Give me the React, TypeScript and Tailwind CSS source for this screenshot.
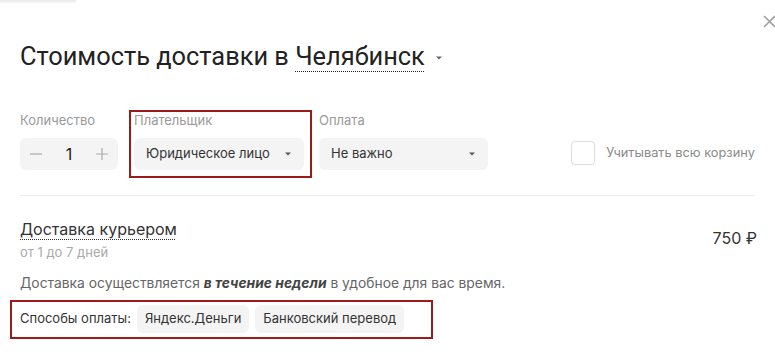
import React from "react";

function Caret({ className = "" }: { className?: string }) {
  return (
    <svg width="6" height="4" viewBox="0 0 6 4" className={className}>
      <path d="M0 0.5h6L3 3.5z" fill="currentColor" />
    </svg>
  );
}

export default function App() {
  return (
    <div
      className="relative w-[775px] h-[360px] overflow-hidden bg-white text-[#333]"
      style={{ fontFamily: "Inter, 'Noto Sans', sans-serif" }}
    >
      {/* край соседнего блока сверху */}
      <div className="absolute left-0 top-0 h-[3px] w-[76px] bg-gradient-to-b from-[#e9e9e9] to-[#f7f7f7]" />

      <button className="absolute right-[-1px] top-[15px] text-[#a0a0a0]">
        <svg width="13" height="13" viewBox="0 0 13 13">
          <path d="M1 1l11 11M12 1L1 12" stroke="currentColor" strokeWidth="1.6" />
        </svg>
      </button>

      <div className="px-[20px] pt-[40px]">
        <h1
          className="flex items-center text-[25.4px] leading-[32px] text-[#222]"
          style={{ fontFamily: "Roboto, 'Liberation Sans', sans-serif" }}
        >
          Стоимость доставки в&nbsp;
          <span className="underline decoration-dotted decoration-1 underline-offset-[6px]">Челябинск</span>
          <Caret className="ml-[11px] mt-[3px] text-[#666]" />
        </h1>

        <div className="mt-[38px] flex items-start">
          <div className="mt-[2px] w-[98px]">
            <div className="text-[13px] leading-4 text-[#9a9a9a]">Количество</div>
            <div className="mt-[10px] flex h-8 items-center justify-between rounded-md bg-[#f4f4f4] px-[10px] text-[#aaa]">
              <svg width="12" height="12" viewBox="0 0 12 12">
                <path d="M0 6h12" stroke="currentColor" strokeWidth="1.2" />
              </svg>
              <span className="text-[16px] text-[#222]">1</span>
              <svg width="12" height="12" viewBox="0 0 12 12">
                <path d="M0 6h12M6 0v12" stroke="currentColor" strokeWidth="1.2" />
              </svg>
            </div>
          </div>

          <div className="ml-[11px] border-2 border-[#9b1b1b] pl-[3px] pr-[6px] pb-[6px]">
            <div className="text-[13px] leading-4 text-[#9a9a9a]">Плательщик</div>
            <div className="mt-[10px] flex h-8 w-[170px] items-center justify-between rounded-md bg-[#f4f4f4] pl-[12px] pr-[13px] text-[13px] text-[#333]">
              Юридическое лицо
              <Caret className="text-[#555]" />
            </div>
          </div>

          <div className="ml-[7px] mt-[2px] w-[169px]">
            <div className="text-[13px] leading-4 text-[#9a9a9a]">Оплата</div>
            <div className="mt-[10px] flex h-8 items-center justify-between rounded-md bg-[#f4f4f4] pl-[12px] pr-[13px] text-[13px] text-[#333]">
              Не важно
              <Caret className="text-[#555]" />
            </div>
          </div>

          <label className="ml-auto mt-[31px] flex items-center gap-[11px]">
            <span className="h-6 w-6 rounded border border-[#dcdcdc] bg-white" />
            <span className="text-[12.8px] text-[#8a8a8a]">Учитывать всю корзину</span>
          </label>
        </div>

        <div className="mt-[17px] h-px bg-[#ececec]" />

        <div className="mt-[21px] flex items-center justify-between">
          <div>
            <div className="text-[16px] leading-6 text-[#333]">
              <span className="underline decoration-dotted decoration-1 underline-offset-[4px]">Доставка курьером</span>
            </div>
            <div className="mt-[2px] text-[13px] leading-[18px] text-[#aaa]">от 1 до 7 дней</div>
          </div>
          <div className="-mr-[2px] mb-[2px] text-[16px] text-[#333]">750 ₽</div>
        </div>

        <p className="mt-[12px] text-[13.85px] leading-5 text-[#666]">
          Доставка осуществляется <b className="font-bold italic text-[#444]">в течение недели</b> в удобное для вас время.
        </p>

        <div className="ml-[-10px] mt-[7px] flex w-[423px] items-center gap-[6px] border-2 border-[#9b1b1b] pl-[8px] pt-[3px] pb-[4px]">
          <span className="text-[13px] text-[#333]">Способы оплаты:</span>
          <div className="flex gap-[6px]">
            <span className="flex h-7 items-center rounded-md bg-[#f4f4f4] px-[8px] text-[13px] text-[#333]">Яндекс.Деньги</span>
            <span className="flex h-7 items-center rounded-md bg-[#f4f4f4] px-[8px] text-[13px] text-[#333]">Банковский перевод</span>
          </div>
        </div>
      </div>
    </div>
  );
}
